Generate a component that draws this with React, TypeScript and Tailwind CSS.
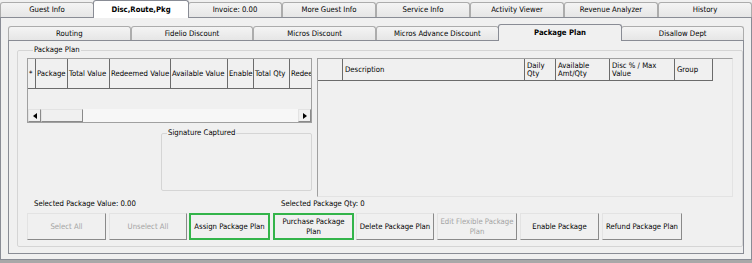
import React from "react";

const topTabs = [
  { label: "Guest Info" },
  { label: "Disc,Route,Pkg", selected: true },
  { label: "Invoice: 0.00" },
  { label: "More Guest Info" },
  { label: "Service Info" },
  { label: "Activity Viewer" },
  { label: "Revenue Analyzer" },
  { label: "History" },
];

const subTabs = [
  { label: "Routing" },
  { label: "Fidelio Discount" },
  { label: "Micros Discount" },
  { label: "Micros Advance Discount" },
  { label: "Package Plan", selected: true },
  { label: "Disallow Dept" },
];

const leftCols = [
  { label: "*", w: "w-[8px]" },
  { label: "Package", w: "w-[32px]" },
  { label: "Total Value", w: "w-[42px]" },
  { label: "Redeemed Value", w: "w-[61px]" },
  { label: "Available Value", w: "w-[57px]" },
  { label: "Enable", w: "w-[26px]" },
  { label: "Total Qty", w: "w-[36px]" },
  { label: "Redeemed Qty", w: "w-[60px]" },
];

const rightCols = [
  { label: [""], w: "w-[25px]" },
  { label: ["Description"], w: "w-[182px]" },
  { label: ["Daily", "Qty"], w: "w-[31px]" },
  { label: ["Available", "Amt/Qty"], w: "w-[54px]" },
  { label: ["Disc % / Max", "Value"], w: "w-[65px]" },
  { label: ["Group"], w: "w-[38px]" },
];

const buttons = [
  { label: "Select All", cls: "w-[79px]", disabled: true },
  { label: "Unselect All", cls: "w-[78px] ml-[3px]", disabled: true },
  { label: "Assign Package Plan", cls: "w-[81px] ml-[2px]", hl: true },
  { label: "Purchase Package Plan", cls: "w-[81px] ml-[3px]", hl: true },
  { label: "Delete Package Plan", cls: "w-[78px] ml-[2px]" },
  { label: "Edit Flexible Package Plan", cls: "w-[80px] ml-[3px]", disabled: true },
  { label: "Enable Package", cls: "w-[79px] ml-[3px]" },
  { label: "Refund Package Plan", cls: "w-[80px] ml-[3px]" },
];

function Arrow({ dir }: { dir: "left" | "right" }) {
  return (
    <svg width="4" height="6" viewBox="0 0 4 6">
      {dir === "left" ? <path d="M4 0 L0 3 L4 6 Z" fill="#000" /> : <path d="M0 0 L4 3 L0 6 Z" fill="#000" />}
    </svg>
  );
}

export default function App() {
  return (
    <div className="w-[752px] h-[263px] bg-[#f0f0f0] overflow-hidden flex flex-col text-[7.7px] text-black font-['DejaVu_Sans_Condensed','DejaVu_Sans',sans-serif] [font-stretch:condensed]">
      {/* Top tabs */}
      <div className="h-[17px] flex items-end shrink-0">
        {topTabs.map((t) =>
          t.selected ? (
            <div
              key={t.label}
              className="relative z-10 -mx-px -mb-px w-[96px] h-[18px] flex items-center justify-center bg-white border border-b-0 border-[#898c95] rounded-t-[3px] font-bold"
            >
              {t.label}
            </div>
          ) : (
            <div
              key={t.label}
              className="w-[94px] h-[15px] flex items-center justify-center bg-linear-to-b from-[#f4f4f4] to-[#e6e6e6] border border-b-0 border-[#acacac] rounded-t-[3px]"
            >
              {t.label}
            </div>
          )
        )}
      </div>

      {/* Outer page */}
      <div className="h-[243px] shrink-0 border border-[#898c95] bg-[#f0f0f0] px-[7px] pt-[6px] pb-[5px] flex flex-col">
        {/* Sub tabs */}
        <div className="h-[16px] flex items-end shrink-0">
          {subTabs.map((t) =>
            t.selected ? (
              <div
                key={t.label}
                className="relative z-10 -mx-px -mb-px w-[125px] h-[17px] flex items-center justify-center bg-[#f0f0f0] border border-b-0 border-[#898c95] rounded-t-[3px] font-bold"
              >
                {t.label}
              </div>
            ) : (
              <div
                key={t.label}
                className="w-[123px] h-[14px] flex items-center justify-center bg-linear-to-b from-[#f4f4f4] to-[#e6e6e6] border border-b-0 border-[#acacac] rounded-t-[3px]"
              >
                {t.label}
              </div>
            )
          )}
        </div>

        {/* Inner page */}
        <div className="h-[214px] shrink-0 border border-[#898c95] bg-[#f0f0f0] px-[8px] pt-[3px] pb-[6px]">
          <fieldset className="border border-[#d5d5d5] rounded-[2px] px-[9px] pb-[6px]">
            <legend className="ml-[6px] px-[1px] leading-[12px]">Package Plan</legend>

            <div className="flex pt-[2px]">
              {/* Left column */}
              <div className="w-[285px] flex flex-col">
                <div className="h-[65px] border border-[#a0a0a0] flex flex-col overflow-hidden">
                  <div className="h-[30px] flex shrink-0">
                    {leftCols.map((c) => (
                      <div
                        key={c.label}
                        className={`${c.w} shrink-0 h-full flex items-center pl-px whitespace-nowrap overflow-hidden border-r border-b border-[#6b6b6b]`}
                      >
                        {c.label}
                      </div>
                    ))}
                  </div>
                  <div className="flex-1" />
                  <div className="h-[13px] flex shrink-0">
                    <div className="w-[13px] flex items-center justify-center border border-[#e3e3e3] border-r-[#8a8a8a] border-b-[#8a8a8a]">
                      <Arrow dir="left" />
                    </div>
                    <div className="w-[42px] border border-[#e3e3e3] border-r-[#8a8a8a] border-b-[#8a8a8a]" />
                    <div className="flex-1 bg-[#f7f7f7]" />
                    <div className="w-[13px] flex items-center justify-center border border-[#e3e3e3] border-r-[#8a8a8a] border-b-[#8a8a8a]">
                      <Arrow dir="right" />
                    </div>
                  </div>
                </div>

                <fieldset className="mt-[4px] ml-auto w-[151px] h-[64px] border border-[#d5d5d5] rounded-[2px]">
                  <legend className="ml-[5px] px-[1px] leading-[12px]">Signature Captured</legend>
                </fieldset>
              </div>

              {/* Right grid */}
              <div className="ml-[5px] w-[416px] h-[139px] border border-[#a0a0a0] border-r-[#e3e3e3] border-b-[#e3e3e3]">
                <div className="h-[22px] flex">
                  {rightCols.map((c, i) => (
                    <div
                      key={i}
                      className={`${c.w} shrink-0 h-full flex flex-col justify-center pl-[2px] leading-[8px] border-r border-b border-[#6b6b6b]`}
                    >
                      {c.label.map((l, j) => (
                        <span key={j}>{l}</span>
                      ))}
                    </div>
                  ))}
                </div>
              </div>
            </div>

            {/* Totals */}
            <div className="h-[12px] mt-px flex items-center">
              <span className="w-[254px] pl-[7px]">Selected Package Value: 0.00</span>
              <span>Selected Package Qty: 0</span>
            </div>

            {/* Buttons */}
            <div className="mt-[3px] flex">
              {buttons.map((b) => (
                <div
                  key={b.label}
                  className={`h-[27px] shrink-0 flex items-center justify-center text-center leading-[10px] px-px ${b.cls} ${
                    b.hl
                      ? "border-2 border-[#33b44a]"
                      : "border border-[#e3e3e3] border-r-[#8a8a8a] border-b-[#8a8a8a]"
                  } ${b.disabled ? "text-[#a3a3a3]" : "text-black"}`}
                >
                  {b.label}
                </div>
              ))}
            </div>
          </fieldset>
        </div>
      </div>
      <div className="flex-1 bg-[#a8a8a8]" />
    </div>
  );
}
